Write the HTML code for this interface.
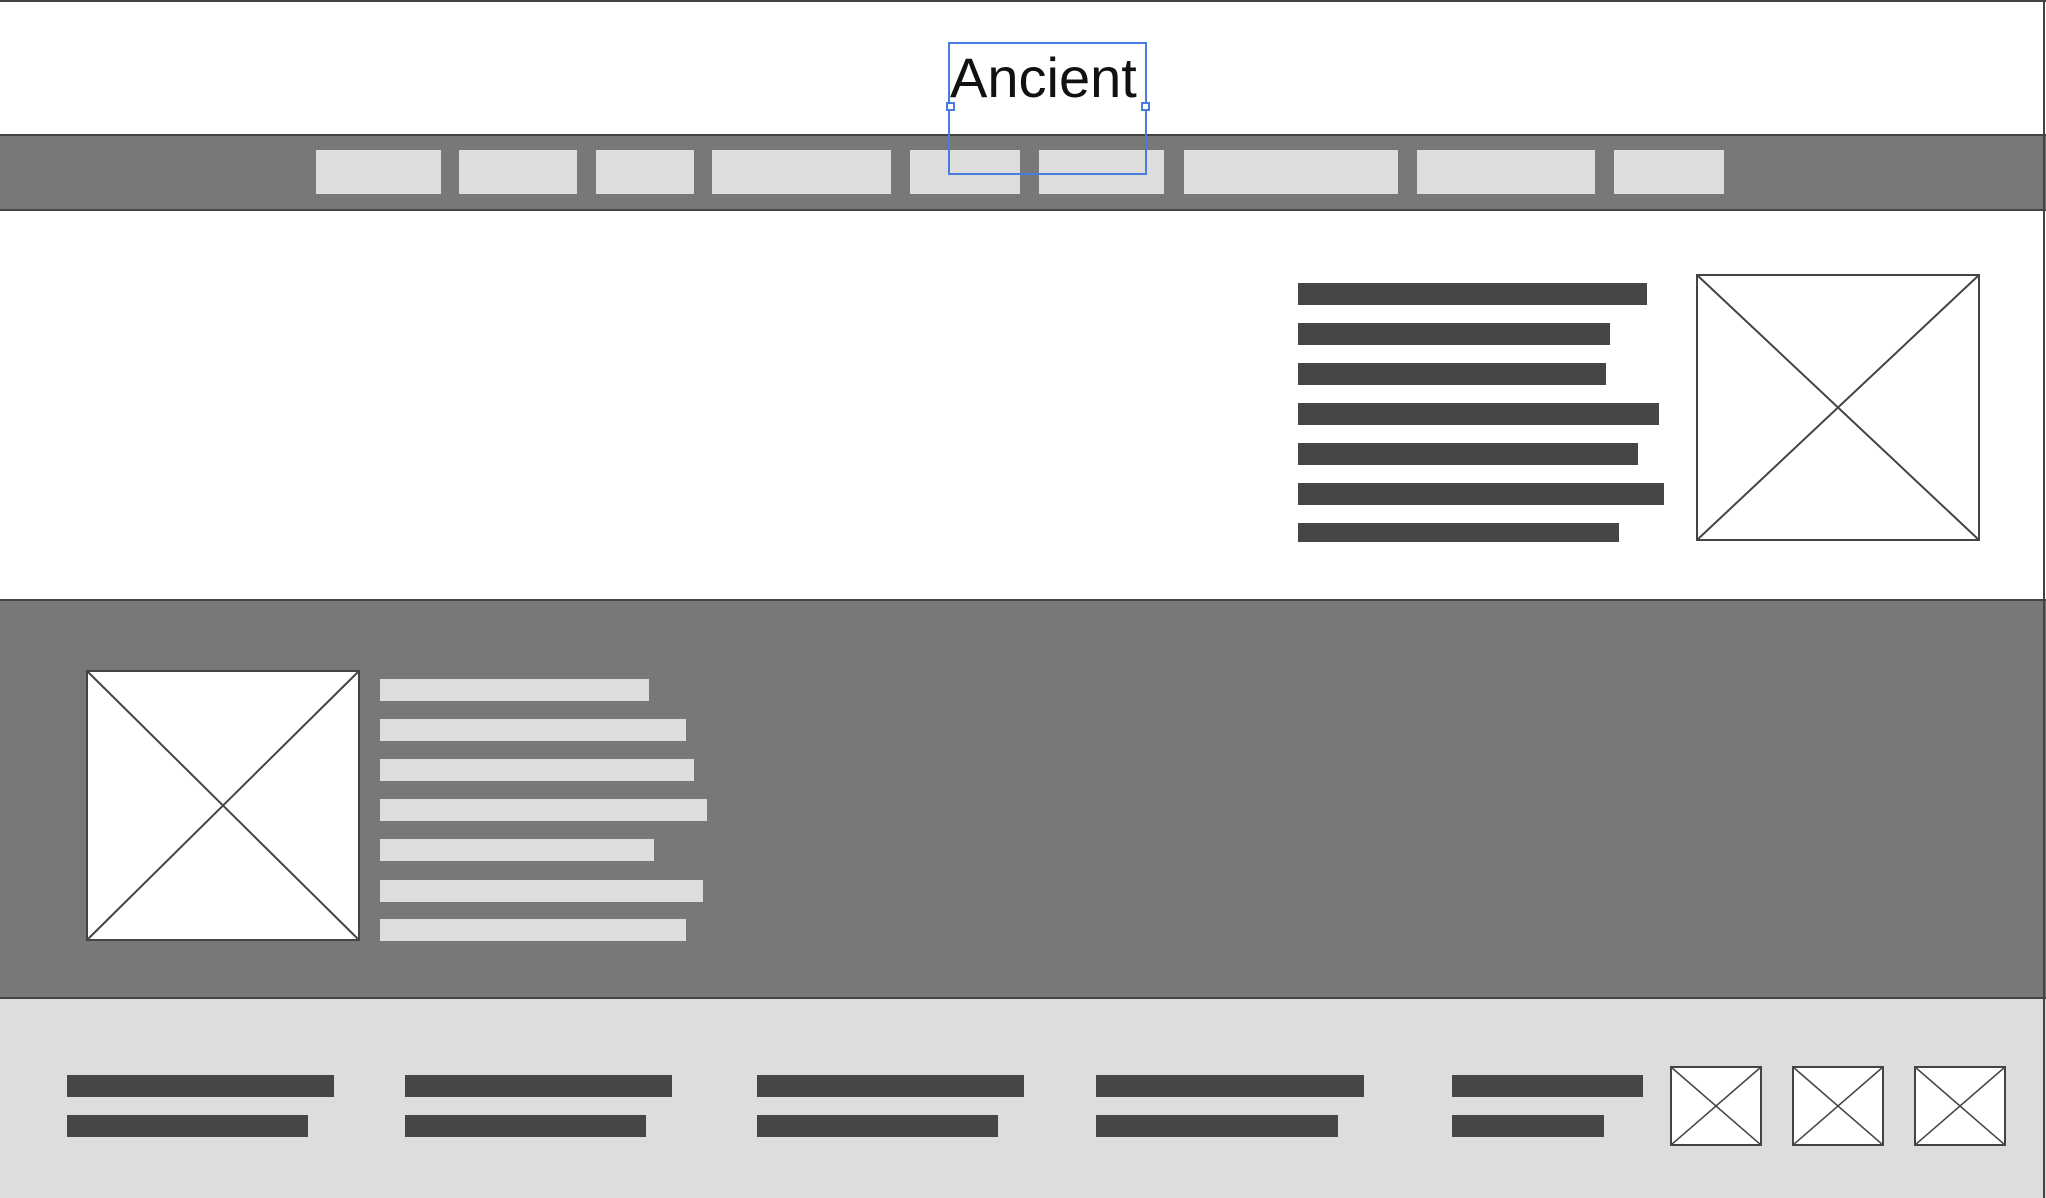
<!DOCTYPE html>
<html><head><meta charset="utf-8"><style>
*{margin:0;padding:0;box-sizing:border-box}
body{width:2046px;height:1198px;position:relative;overflow:hidden;background:#fff;font-family:"Liberation Sans",sans-serif}
.a{position:absolute}
.d{background:#464646;height:22px}
.l{background:#dddddd;height:22px}
.n{background:#dddddd;top:150px;height:44px}
svg{position:absolute;display:block}
</style></head><body>
<div class="a" style="left:0;top:0;width:2046px;height:2px;background:#444"></div>
<div class="a" style="left:2043px;top:0;width:2px;height:1198px;background:#444;z-index:5"></div>
<div class="a" style="left:950px;top:44px;width:200px;font-size:56px;color:#111;line-height:68px">Ancient</div>
<div class="a" style="left:0;top:134px;width:2046px;height:77px;background:#787878;border-top:2px solid #444;border-bottom:2px solid #444"></div>
<div class="a n" style="left:316px;width:125px"></div>
<div class="a n" style="left:459px;width:118px"></div>
<div class="a n" style="left:596px;width:98px"></div>
<div class="a n" style="left:712px;width:179px"></div>
<div class="a n" style="left:910px;width:110px"></div>
<div class="a n" style="left:1039px;width:125px"></div>
<div class="a n" style="left:1184px;width:214px"></div>
<div class="a n" style="left:1417px;width:178px"></div>
<div class="a n" style="left:1614px;width:110px"></div>
<div class="a" style="left:948px;top:42px;width:199px;height:133px;border:2px solid #4a7be0"></div>
<div class="a" style="left:946px;top:102px;width:9px;height:9px;border:2px solid #4a7be0;background:#fff"></div>
<div class="a" style="left:1141px;top:102px;width:9px;height:9px;border:2px solid #4a7be0;background:#fff"></div>

<div class="a d" style="left:1298px;top:283px;width:349px"></div>
<div class="a d" style="left:1298px;top:323px;width:312px"></div>
<div class="a d" style="left:1298px;top:363px;width:308px"></div>
<div class="a d" style="left:1298px;top:403px;width:361px"></div>
<div class="a d" style="left:1298px;top:443px;width:340px"></div>
<div class="a d" style="left:1298px;top:483px;width:366px"></div>
<div class="a d" style="left:1298px;top:523px;width:321px;height:19px"></div>
<svg style="left:1696px;top:274px" width="284" height="267"><rect x="1" y="1" width="282" height="265" fill="#fff" stroke="#444" stroke-width="2"/><path d="M1 1L283 266M283 1L1 266" stroke="#444" stroke-width="2"/></svg>

<div class="a" style="left:0;top:599px;width:2046px;height:400px;background:#787878;border-top:2px solid #444;border-bottom:2px solid #444"></div>
<svg style="left:86px;top:670px" width="274" height="271"><rect x="1" y="1" width="272" height="269" fill="#fff" stroke="#444" stroke-width="2"/><path d="M1 1L273 270M273 1L1 270" stroke="#444" stroke-width="2"/></svg>
<div class="a l" style="left:380px;top:679px;width:269px"></div>
<div class="a l" style="left:380px;top:719px;width:306px"></div>
<div class="a l" style="left:380px;top:759px;width:314px"></div>
<div class="a l" style="left:380px;top:799px;width:327px"></div>
<div class="a l" style="left:380px;top:839px;width:274px"></div>
<div class="a l" style="left:380px;top:880px;width:323px"></div>
<div class="a l" style="left:380px;top:919px;width:306px"></div>

<div class="a" style="left:0;top:999px;width:2046px;height:199px;background:#dddddd"></div>
<div class="a d" style="left:67px;top:1075px;width:267px"></div>
<div class="a d" style="left:67px;top:1115px;width:241px"></div>
<div class="a d" style="left:405px;top:1075px;width:267px"></div>
<div class="a d" style="left:405px;top:1115px;width:241px"></div>
<div class="a d" style="left:757px;top:1075px;width:267px"></div>
<div class="a d" style="left:757px;top:1115px;width:241px"></div>
<div class="a d" style="left:1096px;top:1075px;width:268px"></div>
<div class="a d" style="left:1096px;top:1115px;width:242px"></div>
<div class="a d" style="left:1452px;top:1075px;width:191px"></div>
<div class="a d" style="left:1452px;top:1115px;width:152px"></div>
<svg style="left:1670px;top:1066px" width="92" height="80"><rect x="1" y="1" width="90" height="78" fill="#fff" stroke="#444" stroke-width="2"/><path d="M1 1L91 79M91 1L1 79" stroke="#444" stroke-width="1.5"/></svg>
<svg style="left:1792px;top:1066px" width="92" height="80"><rect x="1" y="1" width="90" height="78" fill="#fff" stroke="#444" stroke-width="2"/><path d="M1 1L91 79M91 1L1 79" stroke="#444" stroke-width="1.5"/></svg>
<svg style="left:1914px;top:1066px" width="92" height="80"><rect x="1" y="1" width="90" height="78" fill="#fff" stroke="#444" stroke-width="2"/><path d="M1 1L91 79M91 1L1 79" stroke="#444" stroke-width="1.5"/></svg>
</body></html>
